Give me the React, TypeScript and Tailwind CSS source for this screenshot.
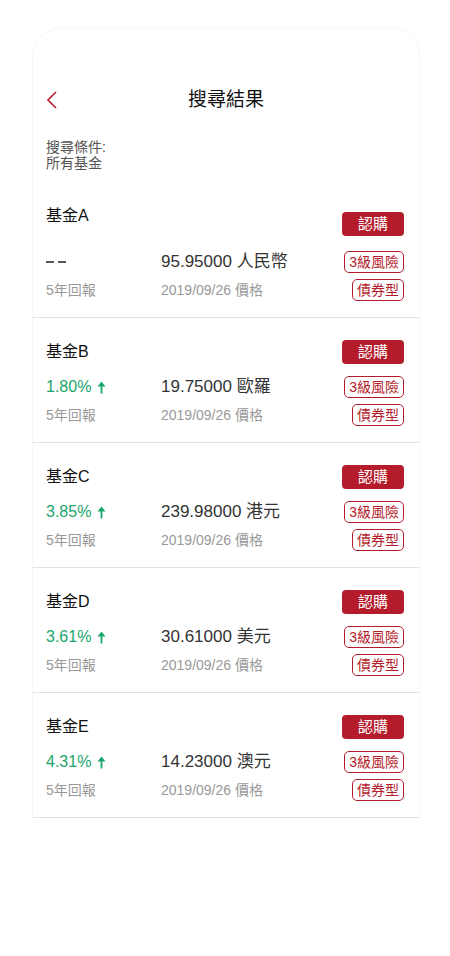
import React from 'react';

type Fund = {
  name: string;
  ret: string | null;
  price: string;
};

const FUNDS: Fund[] = [
  { name: '基金A', ret: null, price: '95.95000 人民幣' },
  { name: '基金B', ret: '1.80%', price: '19.75000 歐羅' },
  { name: '基金C', ret: '3.85%', price: '239.98000 港元' },
  { name: '基金D', ret: '3.61%', price: '30.61000 美元' },
  { name: '基金E', ret: '4.31%', price: '14.23000 澳元' },
];

function UpArrow() {
  return (
    <svg width="9" height="13" viewBox="0 0 9 13" className="ml-[6px]">
      <path d="M4.5 0.5 L8.5 5.5 L5.4 5.5 L5.4 12.5 L3.6 12.5 L3.6 5.5 L0.5 5.5 Z" fill="#1aa66b" />
    </svg>
  );
}

function FundRow({ fund, first }: { fund: Fund; first: boolean }) {
  return (
    <div className={first ? 'pt-[34px] pb-[16px]' : 'pt-[22px] pb-[16px]'}>
      <div className={first ? 'flex items-start justify-between' : 'flex items-center justify-between'}>
        <span className="text-[16px] leading-[22px] text-[#111]">{fund.name}</span>
        <button
          className={`${first ? 'mt-[7px]' : ''} w-[62px] h-[24px] rounded-[4px] bg-[#b41c2b] text-white text-[15px] leading-[24px]`}
        >
          認購
        </button>
      </div>
      <div className={`${first ? 'mt-[15px]' : 'mt-[12px]'} flex items-center h-[22px]`}>
        <div className="w-[115px] flex items-center">
          {fund.ret ? (
            <>
              <span className="text-[16px] text-[#1aa66b]">{fund.ret}</span>
              <UpArrow />
            </>
          ) : (
            <span className="flex items-center gap-[4px] h-[22px]" aria-label="--">
              <span className="block w-[8px] h-[1.5px] bg-[#555]" />
              <span className="block w-[8px] h-[1.5px] bg-[#555]" />
            </span>
          )}
        </div>
        <span className="text-[17px] text-[#333]">{fund.price}</span>
        <span className="ml-auto h-[22px] px-[4px] border border-[#b41c2b] rounded-[5px] text-[14px] leading-[20px] text-[#b41c2b]">
          3級風險
        </span>
      </div>
      <div className="mt-[6px] flex items-center h-[22px]">
        <span className="w-[115px] text-[14px] text-[#999]">5年回報</span>
        <span className="text-[14px] text-[#999]">2019/09/26 價格</span>
        <span className="ml-auto h-[22px] px-[4px] border border-[#b41c2b] rounded-[5px] text-[14px] leading-[20px] text-[#b41c2b]">
          債券型
        </span>
      </div>
    </div>
  );
}

export default function App() {
  return (
    <div
      className="min-h-screen bg-white pt-[27px]"
      style={{ fontFamily: '"Liberation Sans", "Noto Sans CJK TC", sans-serif' }}
    >
      <div className="mx-[32px] w-[388px] rounded-t-[30px] border border-b-0 border-[#f8f6f6]">
        <div className="pt-[42px]">
          <div className="relative h-[60px] flex items-center justify-center">
            <svg
              width="12"
              height="18"
              viewBox="0 0 12 18"
              className="absolute left-[13px] top-[21px]"
            >
              <path d="M10 1 L2 9 L10 17" fill="none" stroke="#b41c2b" strokeWidth="1.6" />
            </svg>
            <span className="text-[19px] text-[#111]">搜尋結果</span>
          </div>
        </div>
        <div className="pl-[13px] pr-[15px] pt-[9px] text-[14px] leading-[16px] text-[#555]">
          <div>搜尋條件:</div>
          <div>所有基金</div>
        </div>
        <div>
          {FUNDS.map((f, i) => (
            <div key={f.name} className="border-b border-[#e2e2e2]">
              <div className="pl-[13px] pr-[15px]">
                <FundRow fund={f} first={i === 0} />
              </div>
            </div>
          ))}
        </div>
      </div>
    </div>
  );
}
